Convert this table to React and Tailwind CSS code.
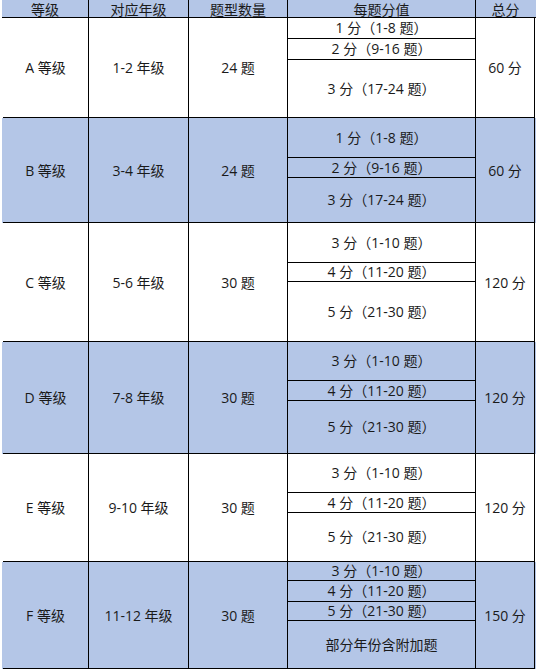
import React from "react";

const BLUE = "bg-[#b4c6e7]";

const rows = [
  { g: "A 等级", y: "1-2 年级", n: "24 题", total: "60 分", h: "h-[100px]", shaded: false,
    subs: [["1 分（1-8 题）", "h-[21px]"], ["2 分（9-16 题）", "h-[21px]"], ["3 分（17-24 题）", "flex-1"]] },
  { g: "B 等级", y: "3-4 年级", n: "24 题", total: "60 分", h: "h-[105px]", shaded: true,
    subs: [["1 分（1-8 题）", "h-[40px]"], ["2 分（9-16 题）", "h-[20px]"], ["3 分（17-24 题）", "flex-1"]] },
  { g: "C 等级", y: "5-6 年级", n: "30 题", total: "120 分", h: "h-[119px]", shaded: false,
    subs: [["3 分（1-10 题）", "h-[40px]"], ["4 分（11-20 题）", "h-[19px]"], ["5 分（21-30 题）", "flex-1"]] },
  { g: "D 等级", y: "7-8 年级", n: "30 题", total: "120 分", h: "h-[112px]", shaded: true,
    subs: [["3 分（1-10 题）", "h-[39px]"], ["4 分（11-20 题）", "h-[20px]"], ["5 分（21-30 题）", "flex-1"]] },
  { g: "E 等级", y: "9-10 年级", n: "30 题", total: "120 分", h: "h-[108px]", shaded: false,
    subs: [["3 分（1-10 题）", "h-[39px]"], ["4 分（11-20 题）", "h-[20px]"], ["5 分（21-30 题）", "flex-1"]] },
  { g: "F 等级", y: "11-12 年级", n: "30 题", total: "150 分", h: "h-[107px]", shaded: true,
    subs: [["3 分（1-10 题）", "h-[19px]"], ["4 分（11-20 题）", "h-[21px]"], ["5 分（21-30 题）", "h-[19px]"], ["部分年份含附加题", "flex-1"]] },
];

const cols = "grid grid-cols-[87px_100px_99px_188px_59px]";

function Cell({ children, className = "" }) {
  return (
    <div className={`flex items-center justify-center border-r border-b border-black whitespace-nowrap ${className}`}>
      {children}
    </div>
  );
}

export default function App() {
  return (
    <div className="w-[537px] h-[671px] bg-white text-[14px] text-[#1a1a1a]" style={{ fontFamily: '"Open Sans", "Noto Sans CJK SC", sans-serif' }}>
      <div className="ml-[2px] w-[534px]">
        <div className={`${cols} h-[18px] ${BLUE} border-b border-black`}>
          {["等级", "对应年级", "题型数量", "每题分值", "总分"].map((t, i) => (
            <div key={i} className={`h-[17px] overflow-hidden flex justify-center items-end ${i < 4 ? "border-r border-black" : ""}`}>
              <span className="leading-[17px] translate-y-[1px]">{t}</span>
            </div>
          ))}
        </div>
        <div className="border-l border-black">
          {rows.map((r, i) => (
            <div key={i} className={`${cols} ${r.h} ${r.shaded ? BLUE : "bg-white"} -ml-px`}>
              <Cell className="ml-px w-[86px]">{r.g}</Cell>
              <Cell>{r.y}</Cell>
              <Cell>{r.n}</Cell>
              <div className="flex flex-col border-r border-b border-black">
                {r.subs.map(([t, h], j) => (
                  <div key={j} className={`${h} flex items-center justify-center whitespace-nowrap leading-none ${j < r.subs.length - 1 ? "border-b border-black" : ""}`}>
                    {t}
                  </div>
                ))}
              </div>
              <Cell>{r.total}</Cell>
            </div>
          ))}
        </div>
      </div>
    </div>
  );
}
